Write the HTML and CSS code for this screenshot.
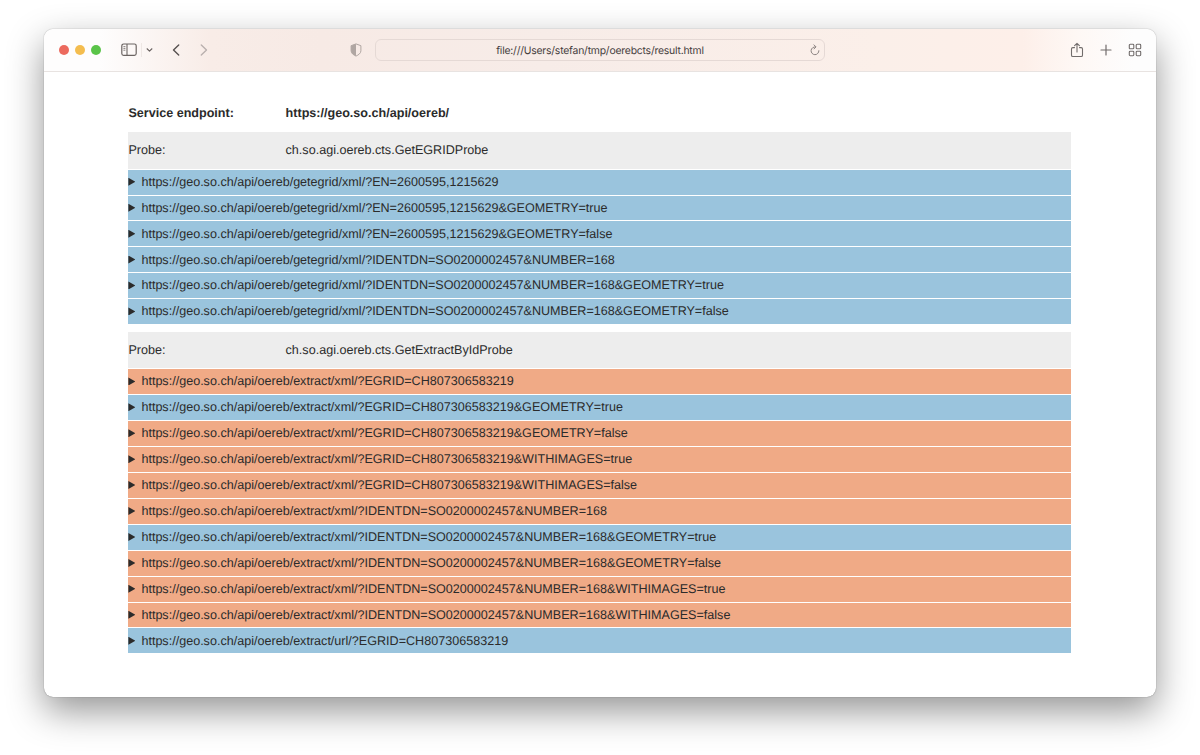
FILE: index.html
```html
<!DOCTYPE html>
<html lang="en">
<head>
<meta charset="utf-8">
<title>result.html</title>
<link rel="stylesheet" href="styles.css">
</head>
<body>
<div class="window">
  <header class="toolbar">
    <div class="left">
      <i class="dot red"></i><i class="dot yellow"></i><i class="dot green"></i>
      <svg class="sidebar" width="16" height="14" viewBox="0 0 16 14" fill="none" stroke="#6b6462"><rect x=".8" y="1" width="14.4" height="11.4" rx="1.8" stroke-width="1.2"/><path d="M6 1v11.4" stroke-width="1.1"/><path d="M2.4 3.6h2M2.4 5.4h2M2.4 7.2h2" stroke-width=".8"/></svg>
      <i class="rule"></i>
      <svg class="chevron" width="7" height="6" viewBox="0 0 7 6" fill="none" stroke="#6b6462" stroke-width="1.2" stroke-linecap="round" stroke-linejoin="round"><path d="M1.1 1.8l2.4 2.3 2.4-2.3"/></svg>
      <svg class="back" width="8" height="14" viewBox="0 0 8 14" fill="none" stroke="#575150" stroke-width="1.4" stroke-linecap="round" stroke-linejoin="round"><path d="M6.7 2L1.5 7l5.2 5"/></svg>
      <svg class="forward" width="8" height="14" viewBox="0 0 8 14" fill="none" stroke="#b9b0ae" stroke-width="1.4" stroke-linecap="round" stroke-linejoin="round"><path d="M1.3 2l5.2 5-5.2 5"/></svg>
    </div>
    <svg class="shield" width="12" height="14" viewBox="0 0 12 14"><path d="M6 .9l4.9 1.8v5.1c0 2.5-2.4 4.1-4.9 5.3C3.500 11.900 1.100 10.300 1.100 7.800V2.700z" fill="none" stroke="#b0a6a2" stroke-width="1"/><path d="M6 .9v12.200C3.500 11.900 1.100 10.300 1.100 7.800V2.700z" fill="#b0a6a2"/></svg>
    <div class="address">
      <span class="url">file:///Users/stefan/tmp/oerebcts/result.html</span>
      <svg class="reload" width="10" height="12" viewBox="0 0 10 12" fill="none" stroke="#8b8381" stroke-linecap="round" stroke-linejoin="round"><path d="M5.500 2.900A3.900 3.900 0 1 0 8.900 6.700M4 .9L6 2.900 4 4.900" stroke-width="1"/></svg>
    </div>
    <div class="right">
      <svg width="14" height="16" viewBox="0 0 14 16" fill="none" stroke="#716c6b" stroke-width="1.100" stroke-linecap="round" stroke-linejoin="round"><path d="M4.500 5.600H2.800c-.8 0-1.300.5-1.300 1.300v6.300c0 .8.500 1.300 1.300 1.300h8.400c.8 0 1.300-.5 1.300-1.300V6.900c0-.8-.5-1.300-1.300-1.300H9.500M7 10V1.400M4.600 3.700L7 1.300l2.400 2.400"/></svg>
      <svg width="12" height="12" viewBox="0 0 12 12" fill="none" stroke="#716c6b" stroke-width="1.200" stroke-linecap="round"><path d="M6 1v10M1 6h10"/></svg>
      <svg width="14" height="14" viewBox="0 0 14 14" fill="none" stroke="#716c6b" stroke-width="1.100"><rect x="1.300" y="1.300" width="4.500" height="4.500" rx=".9"/><rect x="8.200" y="1.300" width="4.500" height="4.500" rx=".9"/><rect x="1.300" y="8.200" width="4.500" height="4.500" rx=".9"/><rect x="8.200" y="8.200" width="4.500" height="4.500" rx=".9"/></svg>
    </div>
  </header>
  <main class="page">
    <div class="endpoint"><span>Service endpoint:</span><span>https://geo.so.ch/api/oereb/</span></div>
    <section class="probe">
      <div class="probe-head"><span>Probe:</span><span>ch.so.agi.oereb.cts.GetEGRIDProbe</span></div>
      <div class="row ok">https://geo.so.ch/api/oereb/getegrid/xml/?EN=2600595,1215629</div>
      <div class="row ok">https://geo.so.ch/api/oereb/getegrid/xml/?EN=2600595,1215629&amp;GEOMETRY=true</div>
      <div class="row ok">https://geo.so.ch/api/oereb/getegrid/xml/?EN=2600595,1215629&amp;GEOMETRY=false</div>
      <div class="row ok">https://geo.so.ch/api/oereb/getegrid/xml/?IDENTDN=SO0200002457&amp;NUMBER=168</div>
      <div class="row ok">https://geo.so.ch/api/oereb/getegrid/xml/?IDENTDN=SO0200002457&amp;NUMBER=168&amp;GEOMETRY=true</div>
      <div class="row ok">https://geo.so.ch/api/oereb/getegrid/xml/?IDENTDN=SO0200002457&amp;NUMBER=168&amp;GEOMETRY=false</div>
    </section>
    <section class="probe">
      <div class="probe-head"><span>Probe:</span><span>ch.so.agi.oereb.cts.GetExtractByIdProbe</span></div>
      <div class="row fail">https://geo.so.ch/api/oereb/extract/xml/?EGRID=CH807306583219</div>
      <div class="row ok">https://geo.so.ch/api/oereb/extract/xml/?EGRID=CH807306583219&amp;GEOMETRY=true</div>
      <div class="row fail">https://geo.so.ch/api/oereb/extract/xml/?EGRID=CH807306583219&amp;GEOMETRY=false</div>
      <div class="row fail">https://geo.so.ch/api/oereb/extract/xml/?EGRID=CH807306583219&amp;WITHIMAGES=true</div>
      <div class="row fail">https://geo.so.ch/api/oereb/extract/xml/?EGRID=CH807306583219&amp;WITHIMAGES=false</div>
      <div class="row fail">https://geo.so.ch/api/oereb/extract/xml/?IDENTDN=SO0200002457&amp;NUMBER=168</div>
      <div class="row ok">https://geo.so.ch/api/oereb/extract/xml/?IDENTDN=SO0200002457&amp;NUMBER=168&amp;GEOMETRY=true</div>
      <div class="row fail">https://geo.so.ch/api/oereb/extract/xml/?IDENTDN=SO0200002457&amp;NUMBER=168&amp;GEOMETRY=false</div>
      <div class="row fail">https://geo.so.ch/api/oereb/extract/xml/?IDENTDN=SO0200002457&amp;NUMBER=168&amp;WITHIMAGES=true</div>
      <div class="row fail">https://geo.so.ch/api/oereb/extract/xml/?IDENTDN=SO0200002457&amp;NUMBER=168&amp;WITHIMAGES=false</div>
      <div class="row ok">https://geo.so.ch/api/oereb/extract/url/?EGRID=CH807306583219</div>
    </section>
  </main>
</div>
</body>
</html>
```
FILE: styles.css
```css
* { box-sizing: border-box; }
body {
  margin: 0;
  height: 755px;
  overflow: hidden;
  padding: 29px 44px 0;
  background: #fff;
  font: 12.58px "Liberation Sans", Arial, sans-serif;
  text-rendering: geometricPrecision;
  color: #2b2b2b;
}
.window {
  height: 668px;
  border-radius: 9px;
  background: #fff;
  box-shadow: 0 0 1px rgba(0,0,0,.55), 0 14px 36px rgba(0,0,0,.42);
  overflow: hidden;
}
.toolbar {
  height: 43px;
  display: flex;
  align-items: center;
  border-bottom: 1px solid #e8e3e1;
  background: linear-gradient(90deg, #fefdfd 5%, #f8ece7 15%, #f7eae5 25%, #f7ece8 45%, #fbefe9 75%, #fdefe9 88%, #fef8f5 93%, #fdfdfd 98%);
}
.left { display: flex; align-items: center; width: 306px; padding-left: 15px; }
.dot { width: 10px; height: 10px; border-radius: 50%; margin-right: 6px; }
.red { background: #ec6a5e; }
.yellow { background: #f4bd4f; }
.green { background: #5ac449; }
.sidebar { margin-left: 14px; }
.rule { width: 1px; height: 14px; background: #eee7e4; margin-left: 4px; }
.chevron { margin-left: 4px; }
.back { margin-left: 19px; }
.forward { margin-left: 20px; }
.shield { flex: none; }
.address {
  display: flex;
  align-items: center;
  justify-content: flex-end;
  width: 450px;
  height: 22px;
  margin-left: 13px;
  padding-right: 4px;
  border: 1px solid #e5d9d5;
  border-radius: 6px;
}
.url {
  flex: 1;
  padding: 1px 0 0 14px;
  text-align: center;
  font: 10.4px Inter, sans-serif;
  letter-spacing: -.21px;
  color: #46403e;
}
.right { display: flex; align-items: center; gap: 16px; margin-left: auto; padding-right: 14px; }
.page { padding: 31px 85px 0 84.400px; }
.endpoint, .probe-head { display: grid; grid-template-columns: 157.200px 1fr; align-items: center; }
.endpoint { height: 21px; padding-bottom: 1px; font-weight: bold; }
.probe { margin-top: 8px; }
.probe + .probe { margin-top: 7.500px; }
.probe-head { height: 36.600px; margin-bottom: 1px; background: #ededed; }
.row {
  display: flex;
  align-items: center;
  height: 24.930px;
  margin-bottom: 1px;
  padding-bottom: .5px;
}
.row::before {
  content: "";
  width: 7px;
  height: 8px;
  margin-right: 6px;
  background: #2b2b2b;
  clip-path: polygon(0 0, 100% 50%, 0 100%);
}
.row:last-child { margin-bottom: 0; }
.ok { background: #9ac4dd; }
.fail { background: #f0aa86; }
```
